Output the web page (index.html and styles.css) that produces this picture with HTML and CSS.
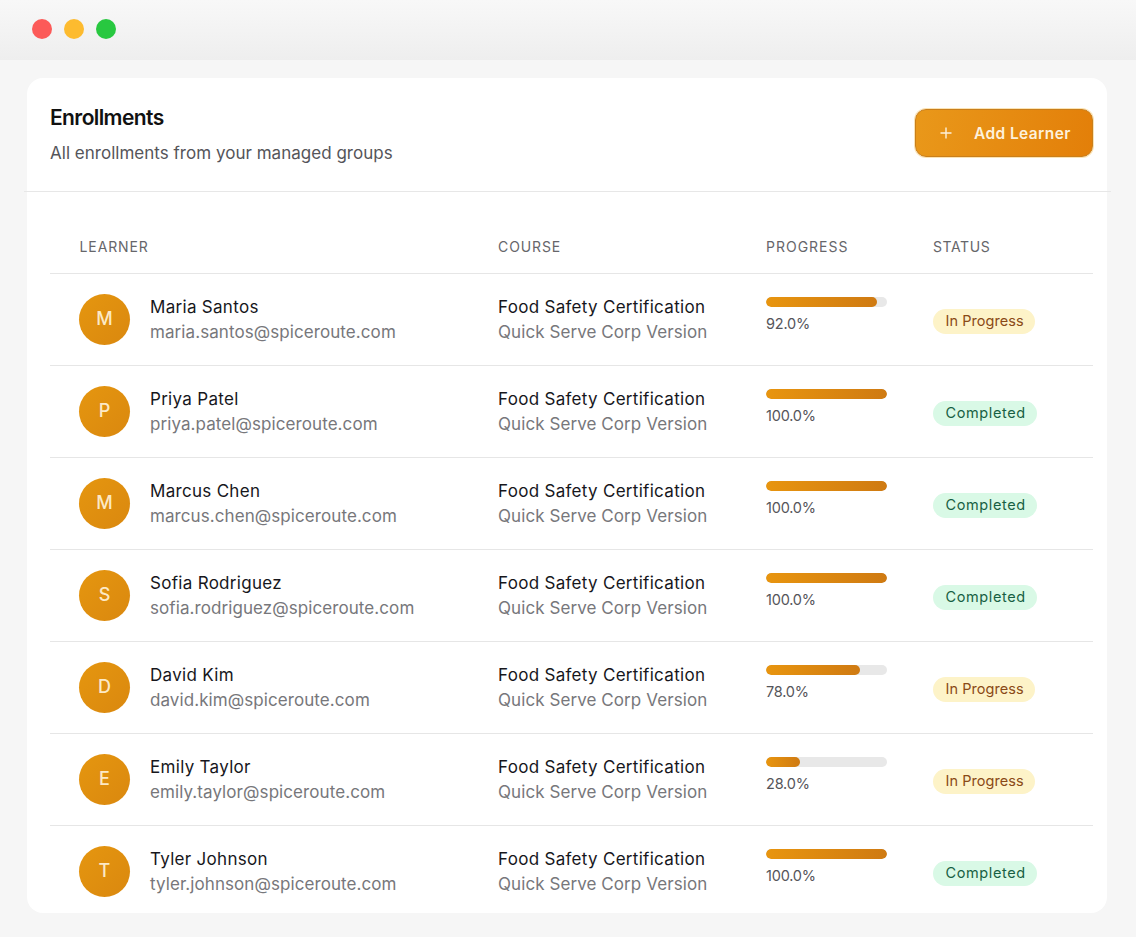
FILE: index.html
```html
<!DOCTYPE html>
<html lang="en">
<head>
<meta charset="utf-8">
<title>Enrollments</title>
<link rel="stylesheet" href="styles.css">
</head>
<body>
<div class="titlebar">
  <span class="dot dot-red"></span><span class="dot dot-yellow"></span><span class="dot dot-green"></span>
</div>
<main class="card">
  <header class="card-head">
    <div>
      <h1 class="title">Enrollments</h1>
      <p class="subtitle">All enrollments from your managed groups</p>
    </div>
    <button class="add-btn">
      <svg class="plus" width="14" height="14" viewBox="0 0 14 14"><path d="M7 1.5v11M1.5 7h11" fill="none" stroke="currentColor" stroke-width="1.4"/></svg>
      <span>Add Learner</span>
    </button>
  </header>
  <section class="table">
    <div class="row head">
      <div class="th first">LEARNER</div><div class="th">COURSE</div><div class="th th-progress">PROGRESS</div><div class="th th-status">STATUS</div>
    </div>
    <div class="row">
      <div class="learner"><span class="avatar">M</span><div><div class="primary">Maria Santos</div><div class="secondary">maria.santos@spiceroute.com</div></div></div>
      <div><div class="primary">Food Safety Certification</div><div class="secondary">Quick Serve Corp Version</div></div>
      <div class="progress"><div class="track"><div class="fill" style="width:92%"></div></div><div class="pct">92.0%</div></div>
      <div><span class="badge amber">In Progress</span></div>
    </div>
    <div class="row">
      <div class="learner"><span class="avatar">P</span><div><div class="primary">Priya Patel</div><div class="secondary">priya.patel@spiceroute.com</div></div></div>
      <div><div class="primary">Food Safety Certification</div><div class="secondary">Quick Serve Corp Version</div></div>
      <div class="progress"><div class="track"><div class="fill" style="width:100%"></div></div><div class="pct">100.0%</div></div>
      <div><span class="badge green">Completed</span></div>
    </div>
    <div class="row">
      <div class="learner"><span class="avatar">M</span><div><div class="primary">Marcus Chen</div><div class="secondary">marcus.chen@spiceroute.com</div></div></div>
      <div><div class="primary">Food Safety Certification</div><div class="secondary">Quick Serve Corp Version</div></div>
      <div class="progress"><div class="track"><div class="fill" style="width:100%"></div></div><div class="pct">100.0%</div></div>
      <div><span class="badge green">Completed</span></div>
    </div>
    <div class="row">
      <div class="learner"><span class="avatar">S</span><div><div class="primary">Sofia Rodriguez</div><div class="secondary">sofia.rodriguez@spiceroute.com</div></div></div>
      <div><div class="primary">Food Safety Certification</div><div class="secondary">Quick Serve Corp Version</div></div>
      <div class="progress"><div class="track"><div class="fill" style="width:100%"></div></div><div class="pct">100.0%</div></div>
      <div><span class="badge green">Completed</span></div>
    </div>
    <div class="row">
      <div class="learner"><span class="avatar">D</span><div><div class="primary">David Kim</div><div class="secondary">david.kim@spiceroute.com</div></div></div>
      <div><div class="primary">Food Safety Certification</div><div class="secondary">Quick Serve Corp Version</div></div>
      <div class="progress"><div class="track"><div class="fill" style="width:78%"></div></div><div class="pct">78.0%</div></div>
      <div><span class="badge amber">In Progress</span></div>
    </div>
    <div class="row">
      <div class="learner"><span class="avatar">E</span><div><div class="primary">Emily Taylor</div><div class="secondary">emily.taylor@spiceroute.com</div></div></div>
      <div><div class="primary">Food Safety Certification</div><div class="secondary">Quick Serve Corp Version</div></div>
      <div class="progress"><div class="track"><div class="fill" style="width:28%"></div></div><div class="pct">28.0%</div></div>
      <div><span class="badge amber">In Progress</span></div>
    </div>
    <div class="row last">
      <div class="learner"><span class="avatar">T</span><div><div class="primary">Tyler Johnson</div><div class="secondary">tyler.johnson@spiceroute.com</div></div></div>
      <div><div class="primary">Food Safety Certification</div><div class="secondary">Quick Serve Corp Version</div></div>
      <div class="progress"><div class="track"><div class="fill" style="width:100%"></div></div><div class="pct">100.0%</div></div>
      <div><span class="badge green">Completed</span></div>
    </div>
  </section>
</main>
</body>
</html>
```
FILE: styles.css
```css
* { box-sizing: border-box; }
html, body { margin: 0; height: 100%; }
body {
  background: #f6f6f6;
  font-family: "Inter", "Noto Sans", "Liberation Sans", sans-serif;
  color: #14141a;
  overflow: hidden;
}
.titlebar {
  height: 60px;
  display: flex;
  align-items: center;
  gap: 12px;
  padding: 0 20px 2px 32px;
  background: linear-gradient(#f8f8f8, #eeeeee);
}
.dot { width: 20px; height: 20px; border-radius: 50%; }
.dot-red { background: #fc5a58; }
.dot-yellow { background: #fdbb2f; }
.dot-green { background: #28c840; }
.card {
  width: 1080px;
  height: 835px;
  margin: 18px 0 0 27px;
  background: #fff;
  border-radius: 16px;
}
.card-head {
  height: 114px;
  display: flex;
  justify-content: space-between;
  align-items: flex-start;
  margin: 0 -4px 0 -3px;
  padding: 31px 18px 0 26px;
  border-bottom: 1px solid #e7e7e7;
}
.title {
  margin: 0;
  font-size: 21px;
  line-height: 20px;
  font-weight: 600;
  letter-spacing: -0.6px;
  color: #111;
  position: relative;
  top: -1px;
}
.subtitle {
  margin: 14px 0 0;
  font-size: 17px;
  line-height: 20px;
  letter-spacing: 0.02px;
  color: #55555a;
}
.add-btn {
  width: 178px;
  height: 48px;
  display: flex;
  align-items: center;
  gap: 21px;
  padding: 0 0 0 23px;
  border: 1px solid #c97f1c;
  border-radius: 11px;
  background: linear-gradient(100deg, #e9981a, #e37f09);
  color: #fdf1dc;
  font: 600 15.5px "Inter", sans-serif;
  letter-spacing: 0.4px;
  box-shadow: 0 0 0 1px #fbe3b4;
}
.table { padding: 0 14px 0 23px; }
.row {
  height: 92px;
  display: grid;
  grid-template-columns: 448px 268px 167px 1fr;
  align-items: center;
  padding-bottom: 1px;
  border-bottom: 1px solid #e6e6e6;
}
.row.last { border-bottom-color: transparent; }
.row.head { height: 82px; padding: 45px 0 0; align-items: start; }
.th {
  font-size: 14px;
  line-height: 20px;
  letter-spacing: 0.9px;
  color: #66666a;
}
.th.first { padding-left: 29.5px; }
.th-progress { letter-spacing: 1px; }
.th-status { letter-spacing: 0.6px; }
.learner { display: flex; align-items: center; gap: 20px; padding-left: 29px; }
.avatar {
  width: 51px;
  height: 51px;
  flex: none;
  border-radius: 50%;
  display: flex;
  align-items: center;
  justify-content: center;
  padding-bottom: 1px;
  background: linear-gradient(135deg, #e5960f, #da880f);
  color: #fce9c6;
  font-size: 18px;
  font-weight: 500;
}
.primary {
  margin-top: 2px;
  font-size: 17px;
  line-height: 25px;
  letter-spacing: 0.3px;
  color: #17171c;
}
.secondary {
  font-size: 17px;
  line-height: 25px;
  letter-spacing: 0.08px;
  color: #77777b;
}
.progress { padding-bottom: 7px; }
.track {
  width: 121px;
  height: 10px;
  border-radius: 5px;
  background: #e8e8e8;
  overflow: hidden;
}
.fill {
  height: 100%;
  border-radius: 5px;
  background: linear-gradient(90deg, #e8950f, #cf7a12);
}
.pct {
  margin-top: 7px;
  font-size: 14.5px;
  line-height: 20px;
  letter-spacing: -0.2px;
  color: #55555a;
}
.badge {
  display: inline-block;
  height: 25px;
  margin-top: 4px;
  padding: 0 11.5px 0 12.5px;
  border-radius: 13px;
  font-size: 14.5px;
  line-height: 24px;
  font-weight: 400;
}
.amber { background: #fdf3c8; color: #8a4a17; letter-spacing: 0.05px; }
.green { background: #d9f9e6; color: #176043; letter-spacing: 0.6px; }
```
